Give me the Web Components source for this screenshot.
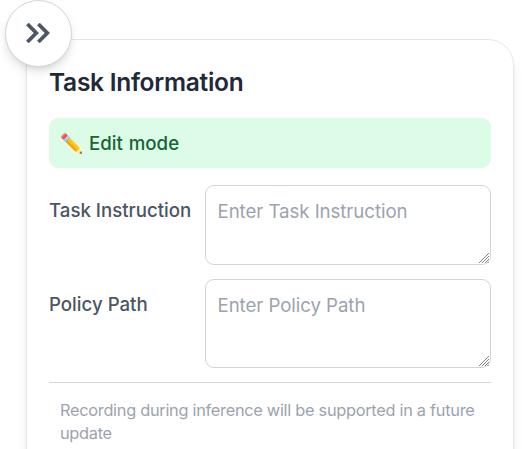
<!DOCTYPE html>
<html lang="en">
<head>
<meta charset="utf-8">
<title>Task Information</title>
<style>
html, body { margin: 0; height: 449px; overflow: hidden; background: #fff; font-family: Inter, sans-serif; }
</style>
</head>
<body>
<info-page></info-page>
<script>
const define = (name, html) => {
  const t = document.createElement('template');
  t.innerHTML = '<style>*{box-sizing:border-box}</style>' + html;
  customElements.define(name, class extends HTMLElement {
    constructor() {
      super();
      this.attachShadow({ mode: 'open' }).append(t.content.cloneNode(true));
    }
    connectedCallback() {
      const area = this.shadowRoot.querySelector('textarea');
      if (area) area.placeholder = this.getAttribute('placeholder') || '';
    }
  });
};

define('collapse-button', `
<style>
:host { position: absolute; left: 5px; top: 0; width: 67px; height: 67px; }
button { display: grid; place-items: center; width: 100%; height: 100%; padding: 0 1px 1px 0; border: 1px solid #d1d5db; border-radius: 50%; background: #fff; color: #4b5563; box-shadow: 0 6px 12px -2px rgba(0,0,0,.13), 0 3px 6px -3px rgba(0,0,0,.1); }
svg { display: block; }
</style>
<button aria-label="Expand"><svg width="40" height="40" viewBox="0 0 24 24" fill="currentColor" stroke="currentColor" stroke-width=".3" stroke-linejoin="round"><path d="M6.41 6 5 7.41 9.58 12 5 16.59 6.41 18l6-6z"/><path d="m13 6-1.41 1.41L16.17 12l-4.58 4.59L13 18l6-6z"/></svg></button>`);

define('info-card', `
<style>
:host { display: flex; flex-direction: column; box-sizing: border-box; width: 488px; height: 560px; margin: 39px 0 0 26px; padding: 22px; border: 1px solid #e5e7eb; border-radius: 26px; background: #fff; box-shadow: 0 10px 14px -3px rgba(0,0,0,.1), 0 4px 6px -4px rgba(0,0,0,.1); }
h2 { margin: 3px 0 19px; font-size: 24.5px; line-height: 34px; font-weight: 600; letter-spacing: -.27px; color: #1f2937; }
.fields { display: grid; gap: 14px; }
</style>
<h2><slot name="title"></slot></h2><slot name="status"></slot><div class="fields"><slot></slot></div><slot name="note"></slot>`);

define('mode-banner', `
<style>
:host { display: flex; align-items: center; box-sizing: border-box; height: 50px; margin-bottom: 17px; padding: 0 11px; border-radius: 9px; background: #dcfce7; color: #166534; font-size: 18.67px; font-weight: 500; white-space: pre; word-spacing: 1px; }
</style><slot></slot>`);

define('task-field', `
<style>
:host { display: grid; grid-template-columns: 156px 286px; font-size: 18.67px; line-height: 28px; }
label { padding-top: 12px; font-weight: 500; color: #4b5563; }
.box { position: relative; height: var(--area-height); }
textarea { display: block; width: 100%; height: 100%; margin: 0; padding: 12px 11px 10px 11.5px; border: 1px solid #d1d5db; border-radius: 9px; background: #fff; color: #1f2937; font: inherit; letter-spacing: -.06px; resize: none; outline: 0; }
textarea::placeholder { color: #9ca3af; }
svg { position: absolute; right: 2px; bottom: 2px; }
</style>
<label for="area"><slot></slot></label><div class="box"><textarea id="area"></textarea><svg width="10" height="10" viewBox="0 0 10 10" fill="none" stroke="#777" stroke-width=".9"><path d="M0 10 10 0M3 10l7-7M6 10l4-4M8.5 10l1.5-1.5"/></svg></div>`);

define('future-note', `
<style>
:host { display: block; margin-top: 14px; padding: 16px 11px; border-top: 1px solid #d1d5db; color: #9ca3af; font-size: 16.33px; line-height: 23.33px; letter-spacing: -.28px; }
</style><slot></slot>`);

define('info-page', `
<style>:host { display: flow-root; position: relative; height: 449px; overflow: hidden; }</style>
<info-card>
  <span slot="title">Task Information</span>
  <mode-banner slot="status">✏️ Edit mode</mode-banner>
  <task-field placeholder="Enter Task Instruction" style="--area-height:80px">Task Instruction</task-field>
  <task-field placeholder="Enter Policy Path" style="--area-height:89px">Policy Path</task-field>
  <future-note slot="note">Recording during inference will be supported in a future update</future-note>
</info-card>
<collapse-button></collapse-button>`);
</script>
</body>
</html>
